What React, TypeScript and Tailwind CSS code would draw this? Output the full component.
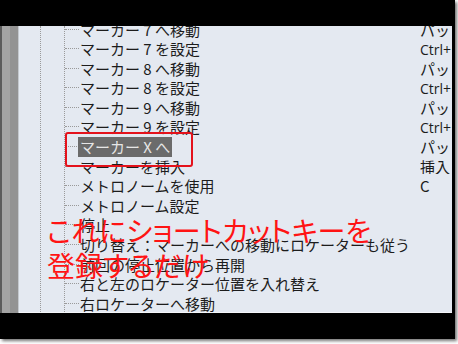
import React from 'react';

type Row = { label: string; key?: string; selected?: boolean };

const rows: Row[] = [
  { label: 'マーカー 7 へ移動', key: 'パッド' },
  { label: 'マーカー 7 を設定', key: 'Ctrl+テンキー' },
  { label: 'マーカー 8 へ移動', key: 'パッド' },
  { label: 'マーカー 8 を設定', key: 'Ctrl+テンキー' },
  { label: 'マーカー 9 へ移動', key: 'パッド' },
  { label: 'マーカー 9 を設定', key: 'Ctrl+テンキー' },
  { label: 'マーカー X へ', key: 'パッド', selected: true },
  { label: 'マーカーを挿入', key: '挿入' },
  { label: 'メトロノームを使用', key: 'C' },
  { label: 'メトロノーム設定' },
  { label: '停止' },
  { label: '切り替え：マーカーへの移動にロケーターも従う' },
  { label: '前回の停止位置から再開' },
  { label: '右と左のロケーター位置を入れ替え' },
  { label: '右ロケーターへ移動' },
];

const jp = { fontFamily: '"Noto Sans CJK JP", "Noto Sans", sans-serif' };

const App: React.FC = () => {
  return (
    <div className="w-[458px] h-[344px] bg-white overflow-hidden">
      <div className="w-[455px] h-[339px] bg-black pt-[26px] pr-[3px] shadow-[2px_2px_3px_rgba(0,0,0,0.55)]">
        <div className="relative flex h-[287px] overflow-hidden" style={jp}>
          {/* left gray strip */}
          <div className="flex shrink-0">
            <div className="w-[2px] bg-[#5c5c5c]" />
            <div className="w-[8px] bg-[#a4a4a4]" />
            <div className="w-[8px] bg-[#939393]" />
            <div className="w-[1px] bg-[#c4c8ce]" />
          </div>

          {/* tree list */}
          <div className="flex flex-1 bg-[#e4e9f1] border-b border-[#f4f6f9]">
            <div className="w-[21px] shrink-0" />
            <div className="w-[24px] shrink-0 border-l border-dotted border-[#9a9a9a]" />
            <div className="flex-1 border-l border-dotted border-[#9a9a9a]">
              <div className="-mt-[6.8px]">
                {rows.map((r, i) => (
                  <div key={i} className="flex items-center h-[19.6px] text-[15px] leading-none text-[#1c1c1c]">
                    <span className="w-[14px] shrink-0 border-t border-dotted border-[#9a9a9a]" />
                    <span className="flex-1 whitespace-nowrap">
                      {r.selected ? (
                        <span className="inline-flex items-center h-[20px] px-[2px] -ml-[1px] bg-[#6b6b6b] text-[#e6e6e6]">
                          {r.label}
                        </span>
                      ) : (
                        <span className="pl-[1px]">{r.label}</span>
                      )}
                    </span>
                    <span className="w-[32px] shrink-0 overflow-hidden whitespace-nowrap">
                      {r.key?.startsWith('Ctrl') ? (
                        <span className="text-[14px]" style={{ fontFamily: '"Open Sans", "Noto Sans CJK JP", sans-serif' }}>
                          {r.key}
                        </span>
                      ) : (
                        r.key
                      )}
                    </span>
                  </div>
                ))}
              </div>
            </div>
          </div>

          {/* red highlight box */}
          <div className="absolute left-[65px] top-[106px] w-[128px] h-[35px] border-2 border-[#e4121c] rounded-[3px]" />

          {/* red caption */}
          <div
            className="absolute left-[47px] top-[187px] text-[28px] leading-[35px] text-[#ff1414]"
            style={{ fontFeatureSettings: '"palt"' }}
          >
            <div>これにショートカットキーを</div>
            <div>登録するだけ</div>
          </div>
        </div>
      </div>
    </div>
  );
};

export default App;
